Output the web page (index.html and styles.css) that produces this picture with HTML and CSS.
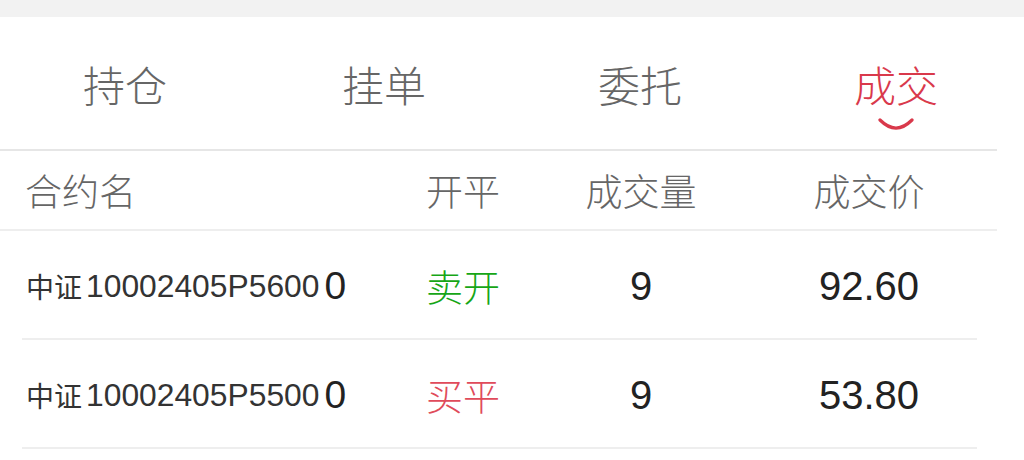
FILE: index.html
```html
<!DOCTYPE html>
<html lang="zh-CN">
<head>
<meta charset="utf-8">
<title>成交</title>
<link rel="stylesheet" href="styles.css">
</head>
<body>
<div class="topbar"></div>
<nav class="tabs">
  <div class="tab"><span class="tab-label">持仓</span><svg class="smile hidden" width="38" height="14" viewBox="0 0 38 14"><path d="M3 3 Q19 19 35 3" fill="none" stroke="#d9394b" stroke-width="3.2" stroke-linecap="round"/></svg></div>
  <div class="tab"><span class="tab-label">挂单</span><svg class="smile hidden" width="38" height="14" viewBox="0 0 38 14"><path d="M3 3 Q19 19 35 3" fill="none" stroke="#d9394b" stroke-width="3.2" stroke-linecap="round"/></svg></div>
  <div class="tab"><span class="tab-label">委托</span><svg class="smile hidden" width="38" height="14" viewBox="0 0 38 14"><path d="M3 3 Q19 19 35 3" fill="none" stroke="#d9394b" stroke-width="3.2" stroke-linecap="round"/></svg></div>
  <div class="tab active"><span class="tab-label">成交</span><svg class="smile" width="38" height="14" viewBox="0 0 38 14"><path d="M3 3 Q19 19 35 3" fill="none" stroke="#d9394b" stroke-width="3.2" stroke-linecap="round"/></svg></div>
</nav>
<div class="divider"></div>
<div class="thead">
  <div class="th name">合约名</div>
  <div class="th">开平</div>
  <div class="th">成交量</div>
  <div class="th">成交价</div>
</div>
<div class="row">
  <div class="td name"><span class="cn">中证</span>10002405P5600<span class="tall">0</span></div>
  <div class="td oc sell">卖开</div>
  <div class="td num">9</div>
  <div class="td num">92.60</div>
</div>
<div class="row">
  <div class="td name"><span class="cn">中证</span>10002405P5500<span class="tall">0</span></div>
  <div class="td oc buy">买平</div>
  <div class="td num">9</div>
  <div class="td num">53.80</div>
</div>
</body>
</html>
```
FILE: styles.css
```css
* { box-sizing: border-box; }
html, body { margin: 0; padding: 0; background: #ffffff; }
body {
  width: 1024px;
  height: 460px;
  overflow: hidden;
  font-family: "Liberation Sans", "Noto Sans CJK SC", sans-serif;
}
.topbar { height: 17px; background: #f2f2f2; }
.tabs {
  display: flex;
  height: 132px;
  width: 1024px;
}
.tab {
  flex: 0 0 256px;
  display: flex;
  flex-direction: column;
  align-items: center;
  padding-top: 46px;
}
.tab:first-child { margin-left: -3px; }
.tab:first-child + .tab { margin-left: 3px; }
.tab-label {
  font-family: "Noto Sans CJK SC", sans-serif;
  font-weight: 300;
  font-size: 42px;
  line-height: 42px;
  color: #666666;
}
.tab.active .tab-label { color: #d9394b; }
.smile { display: block; margin-top: 12px; }
.smile.hidden { visibility: hidden; }
.divider { width: 997px; height: 2px; background: #e6e6e6; }
.thead {
  display: grid;
  grid-template-columns: 390px 146px 210px 246px;
  width: 997px;
  height: 80px;
  align-items: center;
  border-bottom: 2px solid #eeeeee;
}
.th {
  font-family: "Noto Sans CJK SC", sans-serif;
  font-weight: 300;
  font-size: 37px;
  line-height: 40px;
  color: #666666;
  text-align: center;
}
.th.name { text-align: left; padding-left: 25px; }
.row {
  display: grid;
  grid-template-columns: 368px 146px 210px 246px;
  width: 955px;
  margin-left: 22px;
  height: 109px;
  padding-top: 3px;
  align-items: center;
  border-bottom: 2px solid #eeeeee;
}
.td { text-align: center; color: #222222; }
.td.name {
  text-align: left;
  padding-left: 4px;
  font-size: 31.8px;
  color: #333333;
  white-space: nowrap;
  display: flex;
  align-items: center;
}
.cn {
  font-family: "Noto Sans CJK SC", sans-serif;
  font-size: 28px;
  margin-right: 4px;
}
.tall {
  font-size: 39px;
  margin-left: 5px;
  color: #222222;
}
.oc {
  font-family: "Noto Sans CJK SC", sans-serif;
  font-weight: 300;
  font-size: 37px;
}
.sell { color: #16a616; }
.buy { color: #e04b5b; }
.num { font-size: 40px; color: #222222; }
```
